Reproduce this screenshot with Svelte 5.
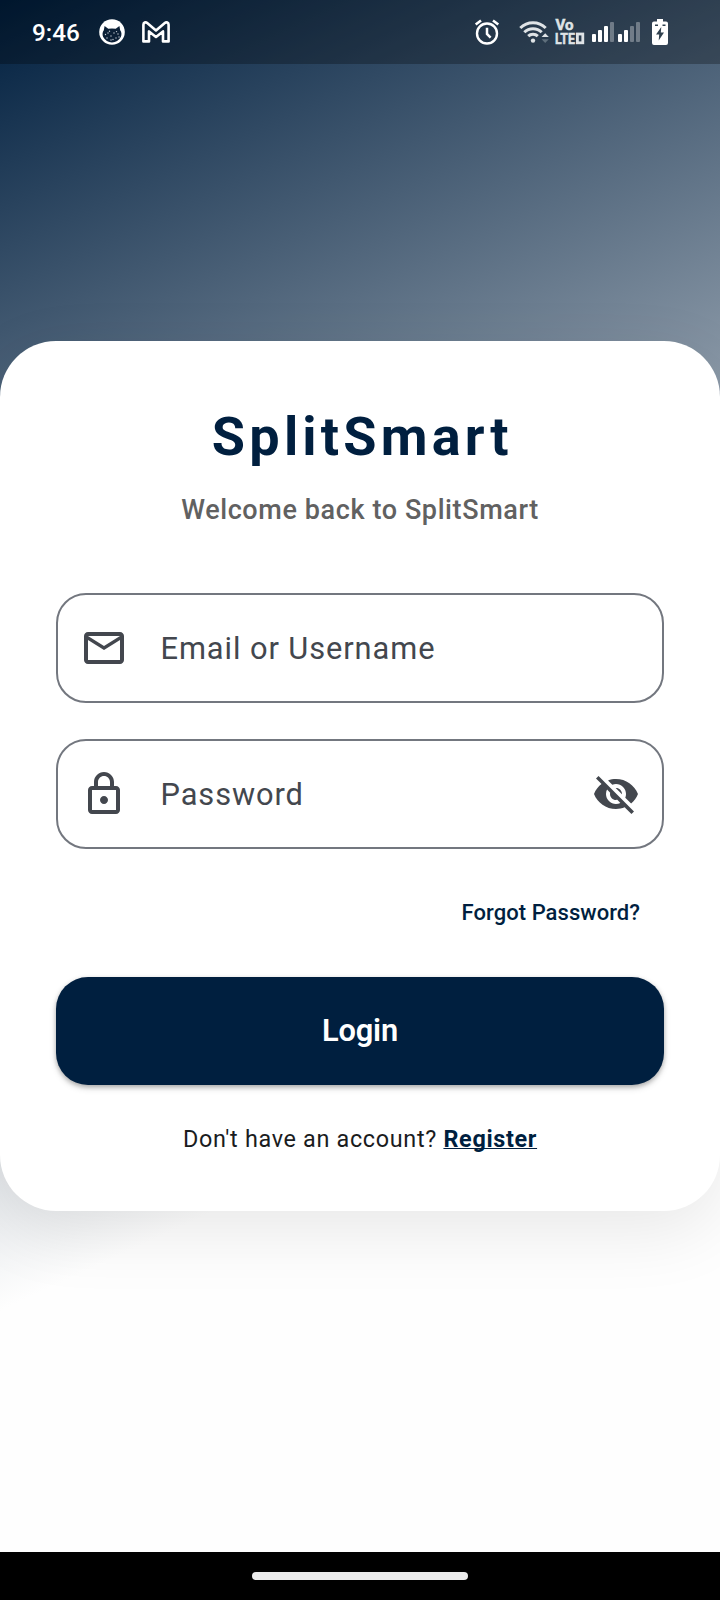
<script>
  let identity = $state('');
  let password = $state('');

  const heights = [8, 12, 16, 20];
  const fills = [[1, 1, 1, 0.32], [1, 1, 0.32, 0.32]];
  const freckles = [[9, 14], [12, 17], [15, 14], [17, 19], [8, 19], [12, 21], [19, 15], [20, 18], [6.5, 15.5], [14, 20.5], [10.5, 12.3], [17.5, 12.6]];
</script>

<div class="screen">
  <header class="status">
    <div class="status-left">
      <span class="time">9:46</span>
      <svg class="cat" width="26" height="26" viewBox="0 0 26 26">
        <circle cx="13" cy="13" r="12.8" fill="#fff" />
        <path fill="#0b1f36" d="M4.8 11.2 L5.6 7 L9.3 9.8 Q13 9 16.7 9.8 L20.4 7 L21.2 11.2 Q23.4 14.4 21.8 18 Q18.8 23.4 13 23.4 Q7.2 23.4 4.2 18 Q2.6 14.4 4.8 11.2 Z" />
        {#each freckles as [x, y]}
          <circle cx={x} cy={y} r="0.7" fill="#c6ced6" />
        {/each}
      </svg>
      <svg class="gm" width="28" height="22" viewBox="0 0 28 22">
        <path fill="none" stroke="#fff" stroke-width="2.6" stroke-linejoin="round" d="M1.4 20.4 V3.8 C1.4 1.5 3.6 .7 5.2 2 L14 9.4 L22.8 2 C24.4 .7 26.6 1.5 26.6 3.8 V20.4 H21 V10.4 L14 16 L7 10.4 V20.4 Z" />
      </svg>
    </div>
    <div class="status-right">
      <svg class="alarm" width="26" height="26" viewBox="0 0 26 26" fill="none" stroke="#fff">
        <circle cx="13" cy="14.5" r="10" stroke-width="2.4" />
        <path stroke-width="2.5" d="M1.7 5.6 L7 1.4 M24.3 5.6 L19 1.4 M13 8.7 V15 L16.6 18.6" />
      </svg>
      <svg class="wifi" width="31" height="24" viewBox="0 0 31 24">
        <g fill="none" stroke="#dfe3e6" stroke-width="3">
          <path d="M1.3 8 A18 18 0 0 1 26.7 8" />
          <path d="M5.3 12.2 A12.4 12.4 0 0 1 22.7 12.2" />
          <path d="M9.2 16.1 A7 7 0 0 1 18.8 16.1" />
        </g>
        <circle cx="14" cy="20.6" r="2.2" fill="#dfe3e6" />
        <path d="M22.6 17 L26.2 13.2 L29.8 17 Z" fill="#dfe3e6" />
        <path d="M22.6 19.2 L26.2 23 L29.8 19.2 Z" fill="#5f6f7c" />
      </svg>
      <svg class="volte" width="31" height="26" viewBox="0 0 31 26" fill="#dfe3e6">
        <text x="0.5" y="11" textLength="18" lengthAdjust="spacingAndGlyphs">Vo</text>
        <text x="0" y="24.8" textLength="20" lengthAdjust="spacingAndGlyphs">LTE</text>
        <rect x="22.4" y="15" width="5.4" height="8.8" fill="none" stroke="#dfe3e6" stroke-width="2.8" />
      </svg>
      {#each fills as set, n}
        <svg class="bars b{n}" width="22" height="20" viewBox="0 0 22 20">
          {#each heights as h, i}
            <rect x={i * 6} y={20 - h} width="4" height={h} rx="1" fill="#fff" fill-opacity={set[i]} />
          {/each}
        </svg>
      {/each}
      <svg class="battery" width="16" height="26" viewBox="0 0 16 26">
        <path fill="#fff" d="M5 0 H11 V2.5 H14 Q16 2.5 16 4.5 V24 Q16 26 14 26 H2 Q0 26 0 24 V4.5 Q0 2.5 2 2.5 H5 Z" />
        <path fill="#2f404e" d="M9.3 8 L4 15.5 H7.2 L6.7 21.5 L12 13.5 H8.8 Z" />
        <path stroke="#2f404e" stroke-width="1.4" d="M3 6.3 H6 M10.5 6.3 H13.5" />
      </svg>
    </div>
  </header>

  <main class="body">
    <form class="card" onsubmit={(e) => e.preventDefault()}>
      <h1>SplitSmart</h1>
      <p class="welcome">Welcome back to SplitSmart</p>

      <label class="field">
        <svg width="48" height="48" viewBox="0 0 24 24"><path d="M22 6c0-1.1-.9-2-2-2H4c-1.1 0-2 .9-2 2v12c0 1.1.9 2 2 2h16c1.1 0 2-.9 2-2V6zm-2 0l-8 5-8-5h16zm0 12H4V8l8 5 8-5v10z" /></svg>
        <input type="text" placeholder="Email or Username" bind:value={identity} />
      </label>

      <label class="field second">
        <svg width="48" height="48" viewBox="0 0 24 24"><path d="M18 8h-1V6c0-2.76-2.24-5-5-5S7 3.24 7 6v2H6c-1.1 0-2 .9-2 2v10c0 1.1.9 2 2 2h12c1.1 0 2-.9 2-2V10c0-1.1-.9-2-2-2zM9 6c0-1.66 1.34-3 3-3s3 1.34 3 3v2H9V6zm9 14H6V10h12v10zm-6-3c1.1 0 2-.9 2-2s-.9-2-2-2-2 .9-2 2 .9 2 2 2z" /></svg>
        <input type="password" placeholder="Password" bind:value={password} />
        <svg width="48" height="48" viewBox="0 0 24 24"><path d="M12 7c2.76 0 5 2.24 5 5 0 .65-.13 1.26-.36 1.83l2.92 2.92c1.51-1.26 2.7-2.89 3.43-4.75-1.73-4.39-6-7.5-11-7.5-1.4 0-2.74.25-3.98.7l2.16 2.16C10.74 7.13 11.35 7 12 7zM2 4.27l2.28 2.28.46.46C3.08 8.3 1.78 10.02 1 12c1.73 4.39 6 7.5 11 7.5 1.55 0 3.03-.3 4.38-.84l.42.42L19.73 22 21 20.73 3.27 3 2 4.27zM7.53 9.8l1.55 1.55c-.05.21-.08.43-.08.65 0 1.66 1.34 3 3 3 .22 0 .44-.03.65-.08l1.55 1.55c-.67.33-1.41.53-2.2.53-2.76 0-5-2.24-5-5 0-.79.2-1.53.53-2.2zm4.31-.78l3.15 3.15.02-.16c0-1.66-1.34-3-3-3l-.17.01z" /></svg>
      </label>

      <a class="forgot" href="#forgot">Forgot Password?</a>
      <button class="login" type="submit">Login</button>
      <p class="signup">Don't have an account? <a href="#register">Register</a></p>
    </form>
  </main>

  <footer class="nav"><span></span></footer>
</div>

<style>
  :global(body) { background: #fff; }
  .screen {
    width: 720px;
    height: 1600px;
    display: flex;
    flex-direction: column;
    overflow: hidden;
    font-family: Roboto, "Liberation Sans", sans-serif;
    background: linear-gradient(155.11deg, #001f3f 0%, #fefefe 69.5%) 0 0 / 720px 1552px no-repeat;
  }
  .status {
    height: 64px;
    flex: none;
    display: flex;
    justify-content: space-between;
    box-sizing: border-box;
    padding: 0 52px 0 32px;
    background: rgba(0, 0, 0, 0.27);
  }
  .status-left, .status-right { display: flex; align-items: center; }
  .time { color: #fff; font-size: 24.3px; font-weight: 500; line-height: 62px; padding-top: 2px; width: 67px; }
  .gm { margin-left: 17px; }
  .wifi { margin-left: 19px; }
  .volte { margin-left: 5px; overflow: visible; font: 700 14.8px Roboto, sans-serif; }
  .volte text { stroke: #dfe3e6; stroke-width: 0.5px; }
  .bars { margin-left: 6px; }
  .b1 { margin-left: 4px; }
  .battery { margin-left: 12px; }

  .body { flex: 1; padding-top: 277px; }
  .card {
    height: 870px;
    box-sizing: border-box;
    padding: 64px 56px 0;
    border-radius: 56px;
    background: #fff;
    box-shadow: 0 20px 70px rgba(0, 0, 0, 0.09);
    display: flex;
    flex-direction: column;
  }
  h1 {
    margin: 0;
    text-align: center;
    text-indent: 4.5px;
    font-size: 54px;
    line-height: 64px;
    font-weight: 700;
    letter-spacing: 4.2px;
    color: #001f3f;
  }
  .welcome {
    margin: 25px 0 0;
    text-align: center;
    font-size: 27px;
    line-height: 32px;
    font-weight: 500;
    letter-spacing: 0.6px;
    color: #616161;
  }
  .field {
    height: 110px;
    margin-top: 67px;
    box-sizing: border-box;
    border: 2px solid #73777f;
    border-radius: 30px;
    padding: 0 22px;
    display: flex;
    align-items: center;
  }
  .second { margin-top: 36px; }
  .field svg { flex: none; fill: #43474e; }
  input {
    flex: 1;
    min-width: 0;
    margin-left: 32.5px;
    padding: 1px 0 0;
    border: 0;
    outline: 0;
    background: none;
    font: 400 30.8px/40px Roboto, sans-serif;
    letter-spacing: 0.92px;
    color: #43474e;
  }
  input::placeholder { color: #43474e; opacity: 1; }
  .forgot {
    align-self: flex-end;
    margin: 48px 24px 0 0;
    font-size: 22px;
    line-height: 32px;
    font-weight: 500;
    letter-spacing: 0.05px;
    color: #001f3f;
    text-decoration: none;
  }
  .login {
    margin: 48px 0 0;
    padding: 0;
    height: 108px;
    flex: none;
    border: 0;
    border-radius: 32px;
    background: #001f3f;
    color: #fff;
    font: 600 30.8px/36px Roboto, sans-serif;
    letter-spacing: -0.2px;
    box-shadow: 0 2px 4px rgba(0, 0, 0, 0.22), 0 3px 7px rgba(0, 0, 0, 0.16);
  }
  .signup {
    margin: 38px 0 0;
    text-align: center;
    font-size: 23.4px;
    line-height: 32px;
    letter-spacing: 0.67px;
    color: #1a1c1e;
  }
  .signup a { color: #001f3f; font-weight: 700; text-decoration: underline; text-decoration-thickness: 1px; text-underline-offset: 1px; text-decoration-skip-ink: none; }
  .nav {
    height: 48px;
    flex: none;
    background: #000;
    display: flex;
    align-items: center;
    justify-content: center;
  }
  .nav span { width: 216px; height: 8px; border-radius: 4px; background: #ebebeb; }
</style>
